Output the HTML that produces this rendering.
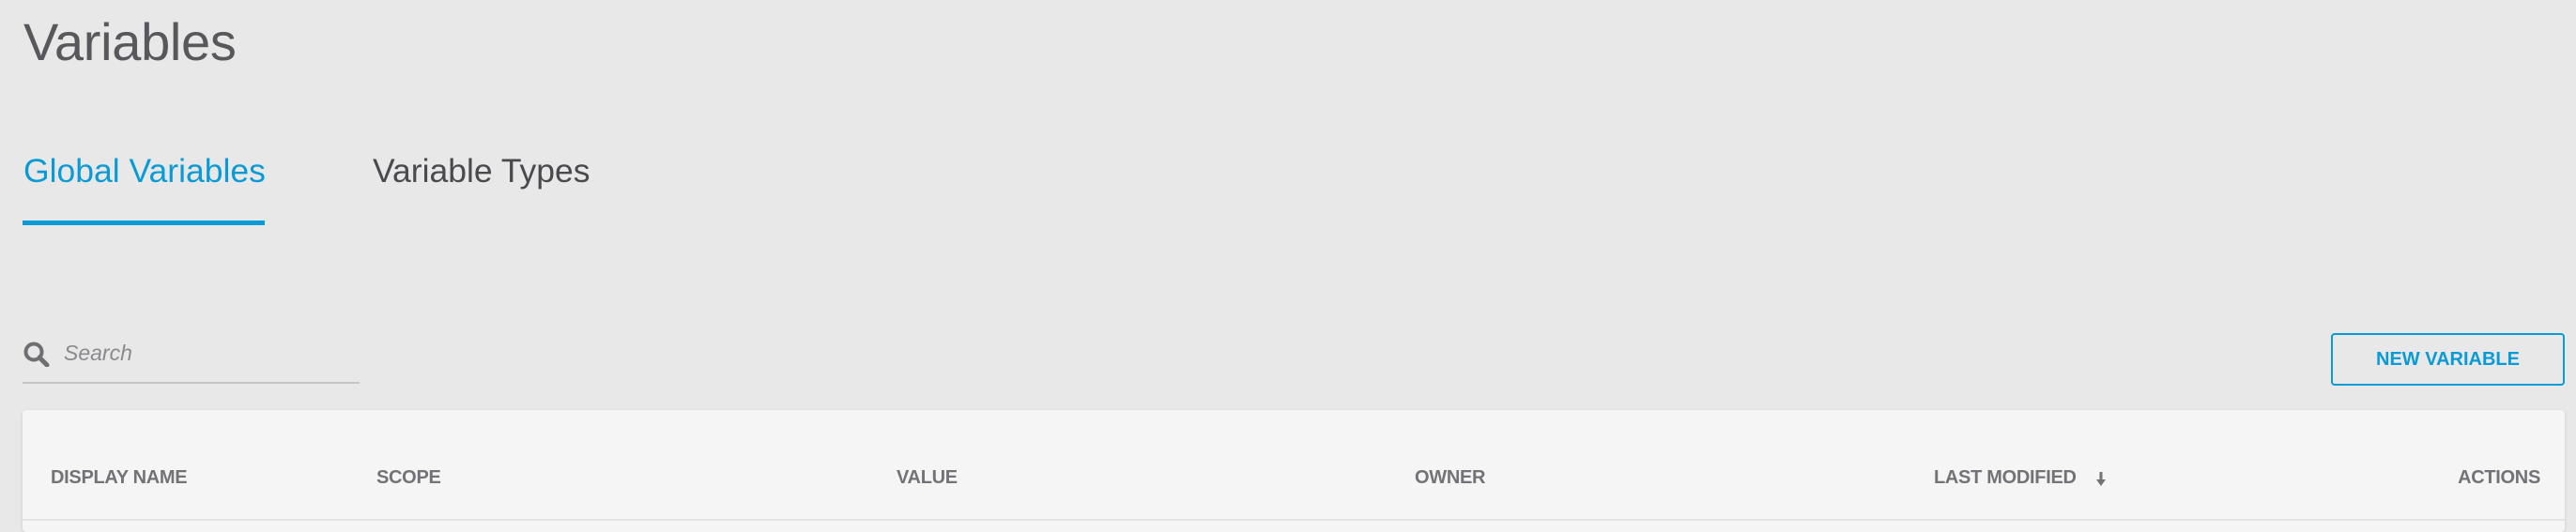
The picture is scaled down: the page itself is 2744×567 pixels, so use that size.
<!DOCTYPE html>
<html><head><meta charset="utf-8"><style>
html,body{margin:0;padding:0;}
body{width:2744px;height:558px;background:#e8e8e8;position:relative;overflow:hidden;font-family:"Liberation Sans",sans-serif;}
.abs{position:absolute;white-space:nowrap;}
#title{left:25px;top:12px;font-size:56px;color:#58585c;font-weight:300;letter-spacing:-0.3px;}
.tab{font-size:35.5px;top:162px;}
#t1{left:25px;color:#0a9ad6;}
#t2{left:397px;color:#4a4a4e;}
#ul{left:24px;top:235px;width:258px;height:5px;background:#0a9ad6;}
#search{left:68px;top:363px;font-size:23px;font-style:italic;color:#8a8a8e;}
#sline{left:24px;top:407px;width:359px;height:2px;background:#c5c5c8;}
#btn{left:2483px;top:355px;width:245px;height:52px;border:2px solid #0a9ad6;border-radius:4px;color:#0a9ad6;font-size:20px;font-weight:bold;text-align:center;line-height:52px;}
#card{left:24px;top:437px;width:2708px;height:130px;background:#f5f5f5;border-radius:4px;box-shadow:0 1px 3px rgba(0,0,0,0.15);}
#rowline{left:24px;top:553px;width:2708px;height:2px;background:#e4e4e4;}
.h{top:498px;font-size:20px;font-weight:bold;color:#727277;letter-spacing:-0.3px;}
</style></head><body>
<div class="abs" id="title">Variables</div>
<div class="abs tab" id="t1">Global Variables</div>
<div class="abs tab" id="t2">Variable Types</div>
<div class="abs" id="ul"></div>
<svg class="abs" style="left:25px;top:364px" width="28" height="27" viewBox="0 0 28 27"><circle cx="11" cy="11" r="8.5" fill="none" stroke="#6e6e73" stroke-width="4"/><line x1="17" y1="17" x2="25" y2="25" stroke="#6e6e73" stroke-width="5" stroke-linecap="round"/></svg>
<div class="abs" id="search">Search</div>
<div class="abs" id="sline"></div>
<div class="abs" id="btn">NEW VARIABLE</div>
<div class="abs" id="card"></div>
<div class="abs" id="rowline"></div>
<div class="abs h" style="left:54px">DISPLAY NAME</div>
<div class="abs h" style="left:401px">SCOPE</div>
<div class="abs h" style="left:955px">VALUE</div>
<div class="abs h" style="left:1507px">OWNER</div>
<div class="abs h" style="left:2060px">LAST MODIFIED</div>
<svg class="abs" style="left:2233px;top:503px" width="10" height="15" viewBox="0 0 10 15"><rect x="3.5" y="0" width="3" height="9" fill="#727277"/><polygon points="0,8 10,8 5,15" fill="#727277"/></svg>
<div class="abs h" style="right:38px">ACTIONS</div>
</body></html>
